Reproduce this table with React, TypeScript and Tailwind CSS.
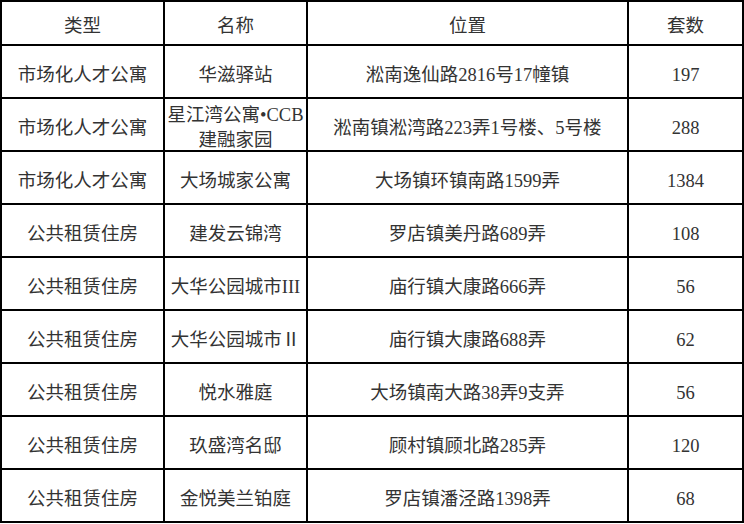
const rows: [string, React.ReactNode, string, string][] = [
  ['市场化人才公寓', '华滋驿站', '淞南逸仙路2816号17幢镇', '197'],
  [
    '市场化人才公寓',
    <>
      <span className="whitespace-nowrap">星江湾公寓•CCB</span>
      <br />
      <span className="whitespace-nowrap">建融家园</span>
    </>,
    '淞南镇淞湾路223弄1号楼、5号楼',
    '288',
  ],
  ['市场化人才公寓', '大场城家公寓', '大场镇环镇南路1599弄', '1384'],
  ['公共租赁住房', '建发云锦湾', '罗店镇美丹路689弄', '108'],
  ['公共租赁住房', '大华公园城市III', '庙行镇大康路666弄', '56'],
  ['公共租赁住房', '大华公园城市Ⅱ', '庙行镇大康路688弄', '62'],
  ['公共租赁住房', '悦水雅庭', '大场镇南大路38弄9支弄', '56'],
  ['公共租赁住房', '玖盛湾名邸', '顾村镇顾北路285弄', '120'],
  ['公共租赁住房', '金悦美兰铂庭', '罗店镇潘泾路1398弄', '68'],
]

const cell =
  'flex items-center justify-center bg-white pt-[7px] text-center whitespace-nowrap'

export default function App() {
  return (
    <div className="h-[524px] w-[744px] bg-white font-['Liberation_Serif','Noto_Sans_CJK_SC',serif] text-[18.5px] leading-[25px] text-[#333]">
      <div className="grid w-[744px] grid-cols-[161px_141px_319px_113px] grid-rows-[42px_repeat(9,51px)] gap-[2px] bg-black p-[2px]">
        {/* header */}
        <div className={cell}>类型</div>
        <div className={cell}>名称</div>
        <div className={cell}>位置</div>
        <div className={cell}>套数</div>

        {rows.map(([type, name, place, count], i) => (
          <div key={i} className="contents">
            <div className={cell}>{type}</div>
            <div className={cell}>
              <div>{name}</div>
            </div>
            <div className={cell}>{place}</div>
            <div className={cell}>{count}</div>
          </div>
        ))}
      </div>
    </div>
  )
}
